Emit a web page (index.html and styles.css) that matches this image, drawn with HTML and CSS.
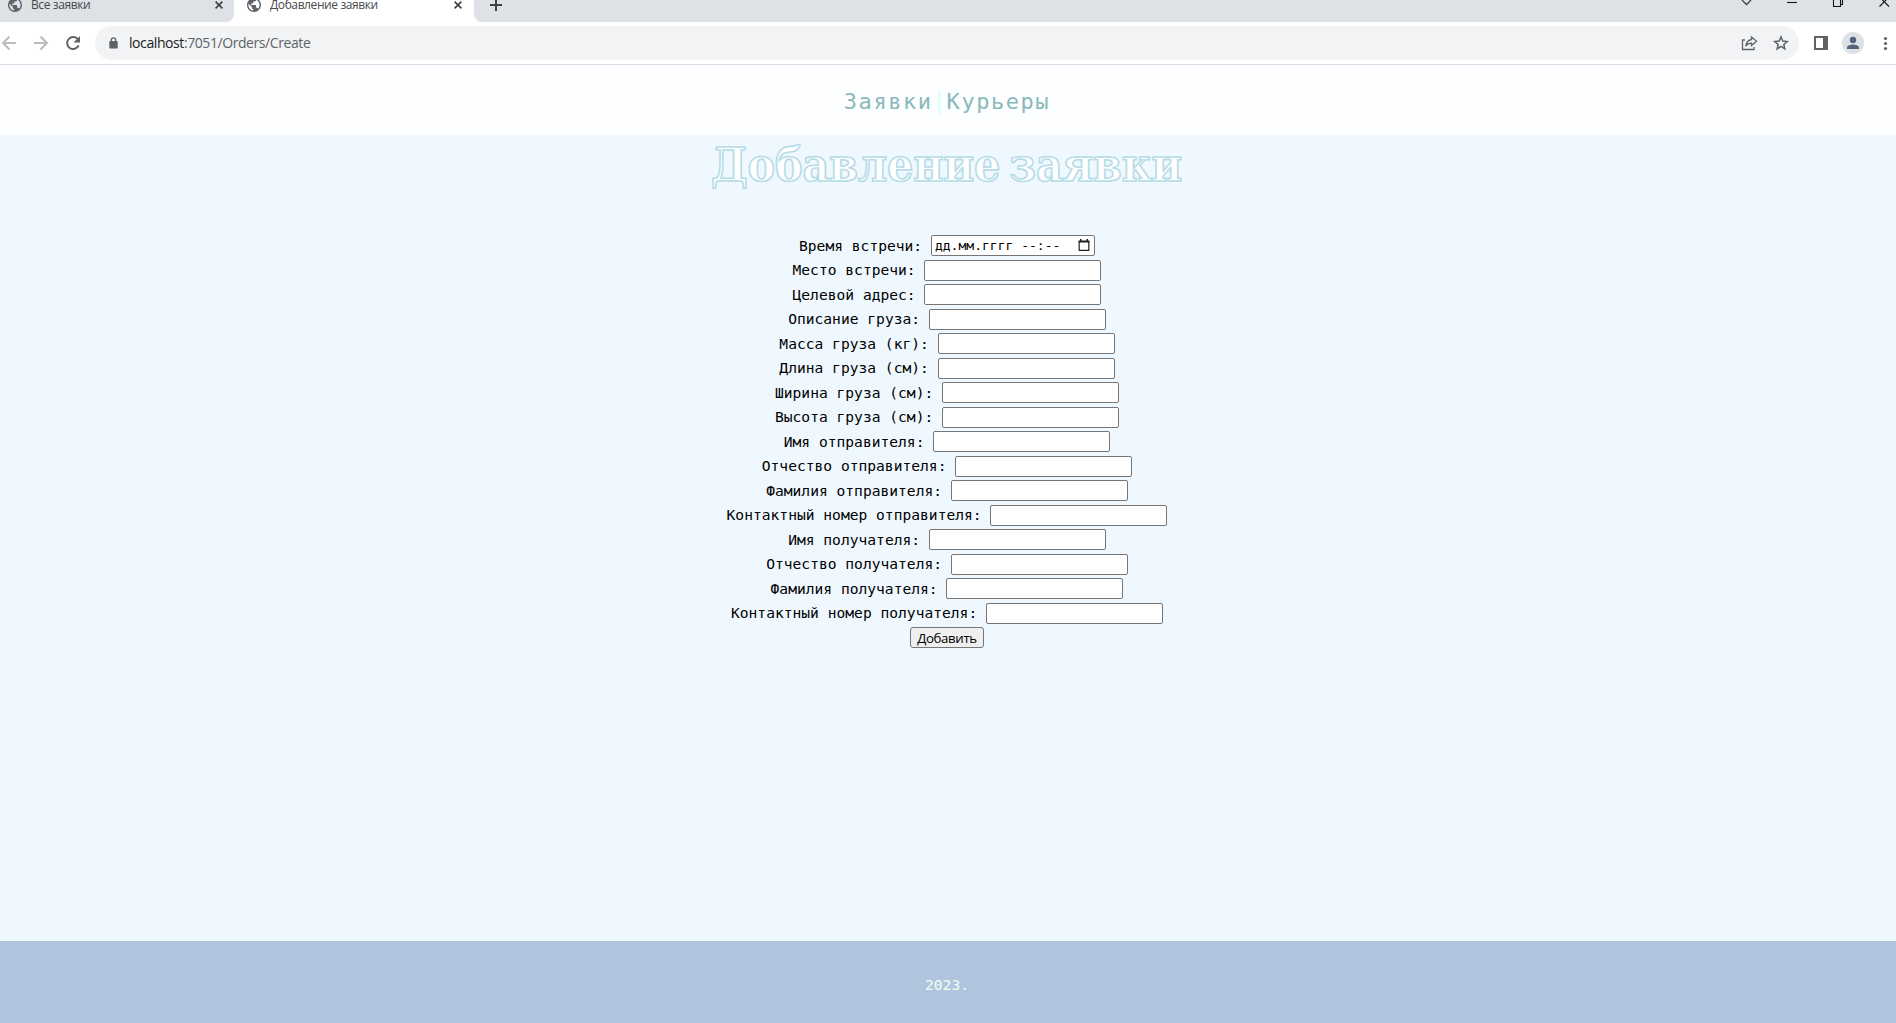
FILE: index.html
```html
<!DOCTYPE html>
<html lang="ru">
<head>
<meta charset="utf-8">
<title>Добавление заявки</title>
<link rel="stylesheet" href="styles.css">
</head>
<body>
<svg width="0" height="0" class="defs">
  <symbol id="globe" viewBox="2 2 20 20"><path fill="#5f6368" d="M12 2C6.480 2 2 6.480 2 12s4.480 10 10 10 10-4.480 10-10S17.520 2 12 2zm-1 17.930c-3.950-.490-7-3.850-7-7.930 0-.620.080-1.210.210-1.790L9 15v1c0 1.100.900 2 2 2v1.930zm6.900-2.540c-.260-.810-1-1.390-1.900-1.390h-1v-3c0-.550-.450-1-1-1H8v-2h2c.550 0 1-.450 1-1V7h2c1.100 0 2-.900 2-2v-.410c2.930 1.190 5 4.060 5 7.410 0 2.080-.800 3.970-2.100 5.390z"/></symbol>
  <symbol id="close" viewBox="0 0 8 8"><path d="M.6.6l6.800 6.800M7.400.6L.6 7.400" stroke="#3c4043" stroke-width="1.600"/></symbol>
</svg>
<div class="tabs">
  <div class="tab tab-first"><svg class="globe"><use href="#globe"/></svg><span class="tab-title">Все заявки</span><svg class="close"><use href="#close"/></svg></div>
  <div class="tab tab-active"><svg class="globe"><use href="#globe"/></svg><span class="tab-title">Добавление заявки</span><svg class="close"><use href="#close"/></svg></div>
  <div class="tab tab-rest">
    <svg class="plus" viewBox="0 0 12 12"><path d="M6 0v12M0 6h12" stroke="#3c4043" stroke-width="2"/></svg>
    <svg class="window-buttons" width="150" height="12" viewBox="0 0 150 12" fill="none" stroke="#111" stroke-width="1.100">
      <path d="M1 0l4.500 4.500L10 0" stroke="#3c4043" stroke-width="1.300"/><path d="M46 2.500h10"/><path d="M92.500-3h7v9.500h-7zM99.500 4.500h2V-3"/><path d="M138.500-3l9.500 9.500M148-3l-9.500 9.500"/>
    </svg>
  </div>
</div>
<div class="toolbar">
  <svg class="nav-icons" width="95" height="42" viewBox="0 22 95 42" fill="none" stroke-width="2">
    <path d="M16 43H3.500M9.500 36.500L3 43l6.500 6.500M34 43h12.500M40.500 36.500L47 43l-6.500 6.500" stroke="#babcbe"/>
    <path d="M78 39.500A6 6 0 1 0 78.600 45.500" stroke="#5f6368"/><path d="M80 36v6.500h-6.500z" fill="#5f6368"/>
  </svg>
  <div class="omnibox">
    <svg class="lock" width="9" height="12" viewBox="0 0 9 12"><path d="M2.300 5V3a2.200 2.200 0 0 1 4.400 0v2" fill="none" stroke="#5f6368" stroke-width="1.300"/><rect x=".3" y="4" width="8.400" height="7.500" rx="1" fill="#5f6368"/></svg>
    <span class="url"><b>localhost</b>:7051/Orders/Create</span>
    <svg class="box-icons" width="48" height="18" viewBox="1741 34 48 18" fill="none" stroke="#5f6368" stroke-width="1.300">
      <path d="M1745 40h-2.500v9.500h11.500V47"/><path d="M1751.500 37l5 4.300-5 4.300v-2.500c-2.800 0-4.400.8-5.700 3 .4-3.400 2.300-6.100 5.700-6.600z"/>
      <path d="M1781 37l1.750 4.100 4.450.4-3.400 2.900 1.050 4.400-3.850-2.350-3.850 2.350 1.050-4.400-3.400-2.900 4.450-.4z" stroke-width="1.500"/>
    </svg>
  </div>
  <svg width="97" height="42" viewBox="1799 22 97 42">
    <path fill="#5f6368" fill-rule="evenodd" d="M1814 36h14v14h-14zM1816 38v10h7V38z"/>
    <circle cx="1853" cy="43" r="11" fill="#dee1e6"/><circle cx="1853" cy="40" r="3.200" fill="#56637d"/><path fill="#56637d" d="M1847 49v-1.500c0-2 3.500-3.100 6-3.100s6 1.100 6 3.100V49z"/>
    <g fill="#5f6368"><circle cx="1885.500" cy="38.500" r="1.600"/><circle cx="1885.500" cy="43.500" r="1.600"/><circle cx="1885.500" cy="48.500" r="1.600"/></g>
  </svg>
</div>
<header class="header"><a class="link link-orders">Заявки</a><a class="link">Курьеры</a></header>
<main class="main">
  <h1 class="title">Добавление заявки</h1>
  <form class="form">
    <div class="row"><label>Время встречи:</label><div class="field date"><span>дд.мм.гггг --:--</span><svg width="12" height="13" viewBox="0 0 12 13"><path d="M1.200 2.500h9.600v8.800H1.200z" fill="none" stroke="#222" stroke-width="1.200"/><path d="M.6 1.500h10.800v2H.6zM2 0h1.500v2H2zM8.500 0H10v2H8.500z" fill="#222"/></svg></div></div>
    <div class="row"><label>Место встречи:</label><input class="field"></div>
    <div class="row"><label>Целевой адрес:</label><input class="field"></div>
    <div class="row"><label>Описание груза:</label><input class="field"></div>
    <div class="row"><label>Масса груза (кг):</label><input class="field"></div>
    <div class="row"><label>Длина груза (см):</label><input class="field"></div>
    <div class="row"><label>Ширина груза (см):</label><input class="field"></div>
    <div class="row"><label>Высота груза (см):</label><input class="field"></div>
    <div class="row"><label>Имя отправителя:</label><input class="field"></div>
    <div class="row"><label>Отчество отправителя:</label><input class="field"></div>
    <div class="row"><label>Фамилия отправителя:</label><input class="field"></div>
    <div class="row"><label>Контактный номер отправителя:</label><input class="field"></div>
    <div class="row"><label>Имя получателя:</label><input class="field"></div>
    <div class="row"><label>Отчество получателя:</label><input class="field"></div>
    <div class="row"><label>Фамилия получателя:</label><input class="field"></div>
    <div class="row"><label>Контактный номер получателя:</label><input class="field"></div>
    <div class="row"><button class="submit" type="button">Добавить</button></div>
  </form>
</main>
<footer class="footer">2023.</footer>
</body>
</html>
```
FILE: styles.css
```css
* { box-sizing: border-box; }
body {
  margin: 0;
  height: 1023px;
  overflow: hidden;
  display: flex;
  flex-direction: column;
  background: #f0f8ff;
  font-family: "DejaVu Sans Mono", monospace;
}
svg { display: block; flex: none; }
.defs { position: absolute; }
.tabs { display: flex; height: 22px; flex: none; background: #fff; }
.tab { display: flex; align-items: center; padding-bottom: 12px; background: #dee1e6; }
.tab-first { width: 234px; padding-left: 8px; border-bottom-right-radius: 8px; }
.tab-active { width: 240px; padding-left: 13px; background: #fff; }
.tab-rest { flex: 1; padding-left: 16px; border-bottom-left-radius: 8px; }
.globe { width: 14px; height: 14px; }
.tab-title {
  flex: 1;
  margin-left: 9px;
  font: 12px/16px "Open Sans", sans-serif;
  letter-spacing: -0.4px;
  color: #45494d;
  white-space: nowrap;
}
.close { width: 8px; height: 8px; margin-right: 11px; }
.tab-active .close { margin-right: 12px; }
.plus { width: 12px; height: 12px; }
.window-buttons { margin: 2px 5px 0 auto; }
.toolbar {
  display: flex;
  align-items: center;
  height: 43px;
  flex: none;
  background: #fff;
  border-bottom: 1px solid #dadce0;
}
.omnibox {
  display: flex;
  align-items: center;
  flex: 1;
  height: 34px;
  padding: 0 10px 0 14px;
  border-radius: 17px;
  background: #f1f3f4;
}
.url {
  flex: 1;
  margin-left: 11px;
  font: 14px/20px "Open Sans", sans-serif;
  letter-spacing: -0.42px;
  color: #5f6368;
}
.url b { font-weight: 400; color: #202124; }
.header {
  display: flex;
  justify-content: center;
  align-items: center;
  height: 70px;
  flex: none;
  padding: 3px 2px 0 0;
  background: #fcfeff;
}
.link {
  padding-left: 6px;
  font-size: 22px;
  line-height: 24px;
  letter-spacing: 1.55px;
  color: #8ab9bb;
}
.link-orders { padding: 0 5px 0 0; border-right: 3px solid #e0ffff; }
.main { flex: 1; }
.title {
  margin: 0;
  height: 98px;
  padding: 1px 3px 0 0;
  text-align: center;
  white-space: nowrap;
  font: bold 46px/58px "DejaVu Serif Condensed", "DejaVu Serif", serif;
  font-stretch: condensed;
  letter-spacing: -0.1px;
  word-spacing: -5px;
  color: #fff;
  -webkit-text-stroke: 1.6px #b5dce8;
}
.row {
  display: flex;
  justify-content: center;
  align-items: flex-start;
  height: 24.5px;
  padding: 2px 2px 0 0;
  font-size: 14.6px;
  line-height: 22px;
  letter-spacing: 0.008px;
  color: #000;
}
.row label { margin: -0.1px 8.8px 0 0; white-space: nowrap; }
.field {
  width: 177px;
  height: 21px;
  margin: 0;
  padding: 0 2px;
  background: #fff;
  border: 1px solid #767676;
  border-radius: 2px;
}
.date {
  display: flex;
  width: 164px;
  align-items: center;
  justify-content: space-between;
  padding: 0 4px 0 3px;
  font-size: 13px;
  line-height: 19px;
}
.submit {
  width: 74px;
  height: 21px;
  margin: 0;
  padding: 0;
  border: 1px solid #767676;
  border-radius: 3px;
  background: #efefef;
  font: 13.3px/18px "Open Sans", sans-serif;
  letter-spacing: -0.4px;
  color: #000;
}
.footer {
  display: flex;
  align-items: center;
  justify-content: center;
  height: 82px;
  flex: none;
  padding: 4px 2px 0 0;
  background: #b0c4de;
  color: #f0fff0;
  font-size: 14.6px;
}
```
